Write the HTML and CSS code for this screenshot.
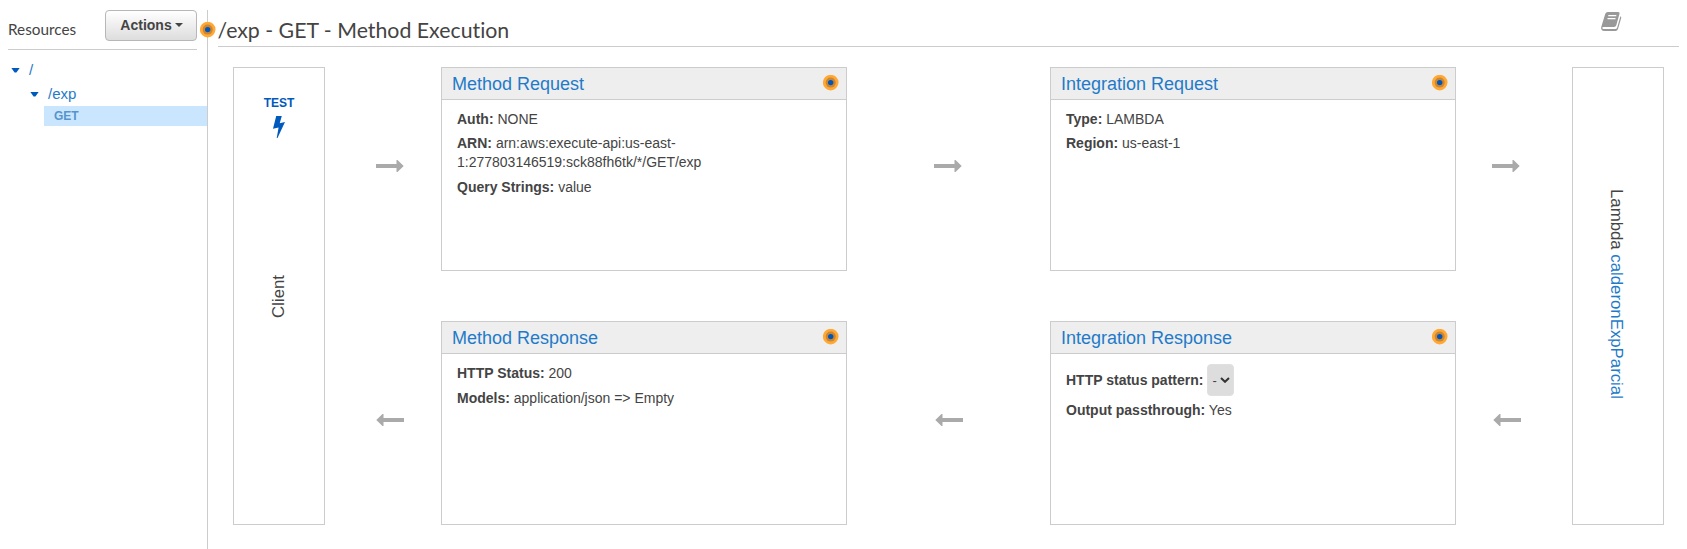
FILE: index.html
```html
<!DOCTYPE html>
<html lang="en">
<head>
<meta charset="utf-8">
<title>Method Execution</title>
<link rel="stylesheet" href="styles.css">
</head>
<body>
<svg class="defs" width="0" height="0">
  <symbol id="arrow" viewBox="0 0 28 12"><path d="M0 4h20.500V0H21.500L27.700 6 21.500 12H20.500V8H0z"/></symbol>
  <symbol id="dot" viewBox="0 0 16 16"><circle cx="7.700" cy="7.600" r="7.800" fill="#ffa833"/><circle cx="7.700" cy="7.600" r="5" fill="#cc8633"/><circle cx="7.700" cy="7.600" r="2.700" fill="#0055b8"/></symbol>
</svg>
<div class="app">
  <aside class="sidebar">
    <div class="side-head">
      <span class="side-title">Resources</span>
      <button class="actions">Actions<i class="caret"></i></button>
    </div>
    <div class="tree">
      <div class="node root"><i class="tri"></i><a>/</a></div>
      <div class="node child"><i class="tri"></i><a>/exp</a></div>
      <div class="node verb">GET</div>
    </div>
    <svg class="dot handle"><use href="#dot"/></svg>
  </aside>
  <main class="main">
    <header class="head">
      <h1>/exp - GET - Method Execution</h1>
      <svg class="book" viewBox="0 0 21 20"><path fill="#999" d="M6.800 0H17.200Q19 0 18.500 1.800L15.300 13.300Q14.800 15 13 15H2.400Q1.500 15 1.300 15.800 1.200 17 2.600 17H14.200Q15.700 17 16.200 15.500L19.400 4.200Q20.600 4.600 20.200 6L17 17Q16.300 19 14.500 19H3Q0.800 19 0.200 17 0 15.800 0.400 14.500L4.200 2Q4.900 0 6.800 0z"/><path d="M7.300 3.600h8M6.500 6.600h8" stroke="#fff" stroke-width="1.200"/></svg>
    </header>
    <div class="flow">
      <section class="endpoint client">
        <a class="test">TEST<svg class="bolt" viewBox="0 0 12 22"><path d="M3.200 0H8.800L6.700 7.300 12 5.900 4.500 22H3.700L5.600 11.400 0 12.800z"/></svg></a>
        <span class="side-label up">Client</span>
      </section>
      <div class="arrows edge-l"><svg class="arrow"><use href="#arrow"/></svg><svg class="arrow back"><use href="#arrow"/></svg></div>
      <div class="column">
        <section class="card">
          <h2>Method Request<svg class="dot"><use href="#dot"/></svg></h2>
          <div class="body">
            <p><b>Auth:</b> NONE</p>
            <p><b>ARN:</b> arn:aws:execute-api:us-east-<br>1:277803146519:sck88fh6tk/*/GET/exp</p>
            <p class="spaced"><b>Query Strings:</b> value</p>
          </div>
        </section>
        <section class="card">
          <h2>Method Response<svg class="dot"><use href="#dot"/></svg></h2>
          <div class="body">
            <p><b>HTTP Status:</b> 200</p>
            <p class="spaced"><b>Models:</b> application/json =&gt; Empty</p>
          </div>
        </section>
      </div>
      <div class="arrows middle"><svg class="arrow"><use href="#arrow"/></svg><svg class="arrow back"><use href="#arrow"/></svg></div>
      <div class="column">
        <section class="card">
          <h2>Integration Request<svg class="dot"><use href="#dot"/></svg></h2>
          <div class="body">
            <p><b>Type:</b> LAMBDA</p>
            <p><b>Region:</b> us-east-1</p>
          </div>
        </section>
        <section class="card">
          <h2>Integration Response<svg class="dot"><use href="#dot"/></svg></h2>
          <div class="body">
            <p class="pattern"><b>HTTP status pattern:</b><span class="select">-<svg viewBox="0 0 10 6"><path d="M1 1l4 3.800L9 1"/></svg></span></p>
            <p><b>Output passthrough:</b> Yes</p>
          </div>
        </section>
      </div>
      <div class="arrows edge-r"><svg class="arrow"><use href="#arrow"/></svg><svg class="arrow back"><use href="#arrow"/></svg></div>
      <section class="endpoint lambda"><span class="side-label">Lambda <a>calderonExpParcial</a></span></section>
    </div>
  </main>
</div>
</body>
</html>
```
FILE: styles.css
```css
* { box-sizing: border-box; }
body { margin: 0; background: #fff; color: #444; font: 14px/19px "Liberation Sans", Arial, sans-serif; }
h1, h2, p { margin: 0; font-weight: normal; }
a { color: #1f7bc9; }
.defs { position: absolute; }
.app { display: flex; height: 549px; padding-top: 10px; overflow: hidden; }
.sidebar { position: relative; width: 208px; border-right: 1px solid #ccc; }
.side-head { display: flex; justify-content: space-between; height: 40px; margin: 0 10px 0 8px; border-bottom: 1px solid #ccc; }
.side-title { font: 15.300px/20px Lato, sans-serif; padding-top: 9px; }
.actions { display: flex; align-items: center; justify-content: center; width: 92px; height: 31px; padding: 0 0 2px 1px; border: 1px solid #b7b7b7; border-radius: 4px; background: linear-gradient(#fff, #ddd); color: #444; font: bold 14px "Liberation Sans", Arial, sans-serif; }
.caret { margin-left: 3px; border: 4px solid transparent; border-top-color: #444; border-bottom: 0; }
.tree { padding-top: 8px; }
.node { display: flex; align-items: center; height: 24px; }
.node a { padding-bottom: 2px; font-size: 15px; }
.tri { width: 9px; height: 5px; background: #0059bd; clip-path: polygon(0 0, 100% 0, 60% 100%, 40% 100%); }
.root { padding-left: 11px; gap: 9px; }
.child { padding-left: 30px; gap: 9px; }
.verb { height: 20px; margin-left: 44px; padding-left: 10px; background: #cae6ff; color: #5694ce; font-size: 12px; font-weight: bold; }
.dot { display: block; width: 16px; height: 16px; }
.handle { position: absolute; right: -9px; top: 12px; }
.main { flex: 1; padding: 0 8px 0 10px; }
.head { display: flex; justify-content: space-between; height: 37px; border-bottom: 1px solid #ccc; }
h1 { margin-left: -0.5px; font: 21.300px/28px Lato, sans-serif; font-variant-ligatures: none; padding-top: 6px; }
.book { width: 21px; height: 20px; margin: 2px 57px 0 0; }
.flow { display: flex; height: 458px; margin: 20px 15px 0; }
.endpoint { display: flex; flex-direction: column; align-items: center; width: 92px; border: 1px solid #ccc; }
.test { display: flex; flex-direction: column; align-items: center; gap: 3px; padding-top: 26px; color: #0059bd; font-size: 12px; font-weight: bold; }
.bolt { width: 12px; height: 22px; fill: #0059bd; }
.side-label { writing-mode: vertical-rl; font-size: 16.800px; line-height: 18px; white-space: nowrap; }
.up { margin-top: 137px; transform: rotate(180deg); }
.lambda { padding-top: 121px; }
.lambda .side-label { margin-right: 4px; }
.arrows { display: flex; flex-direction: column; gap: 242px; padding-top: 93px; }
.edge-l { width: 116px; padding-left: 51px; }
.middle { width: 203px; padding-left: 87px; }
.edge-r { width: 116px; padding-left: 36px; }
.arrow { width: 28px; height: 12px; fill: #aaa; }
.back { transform: scaleX(-1); margin-left: 1px; }
.edge-l .back { margin-left: 0; }
.column { display: flex; flex-direction: column; gap: 50px; width: 406px; }
.card { height: 204px; border: 1px solid #ccc; }
h2 { display: flex; justify-content: space-between; height: 32px; padding: 7px 7px 0 10px; border-bottom: 1px solid #ccc; background: #eee; color: #1f7bc9; font-size: 18px; line-height: 19px; }
.body { display: flex; flex-direction: column; gap: 5px; padding: 10px 15px; }
.spaced { padding-top: 1px; }
.pattern { display: flex; align-items: center; height: 32px; gap: 4px; }
.select { display: flex; align-items: center; justify-content: space-between; width: 27px; height: 32px; padding: 0 3px 0 4px; border: 1px solid #e0e0e0; border-radius: 4px; background: #ddd; font-size: 13px; }
.select svg { width: 10px; height: 6px; fill: none; stroke: #333; stroke-width: 2; }
```
